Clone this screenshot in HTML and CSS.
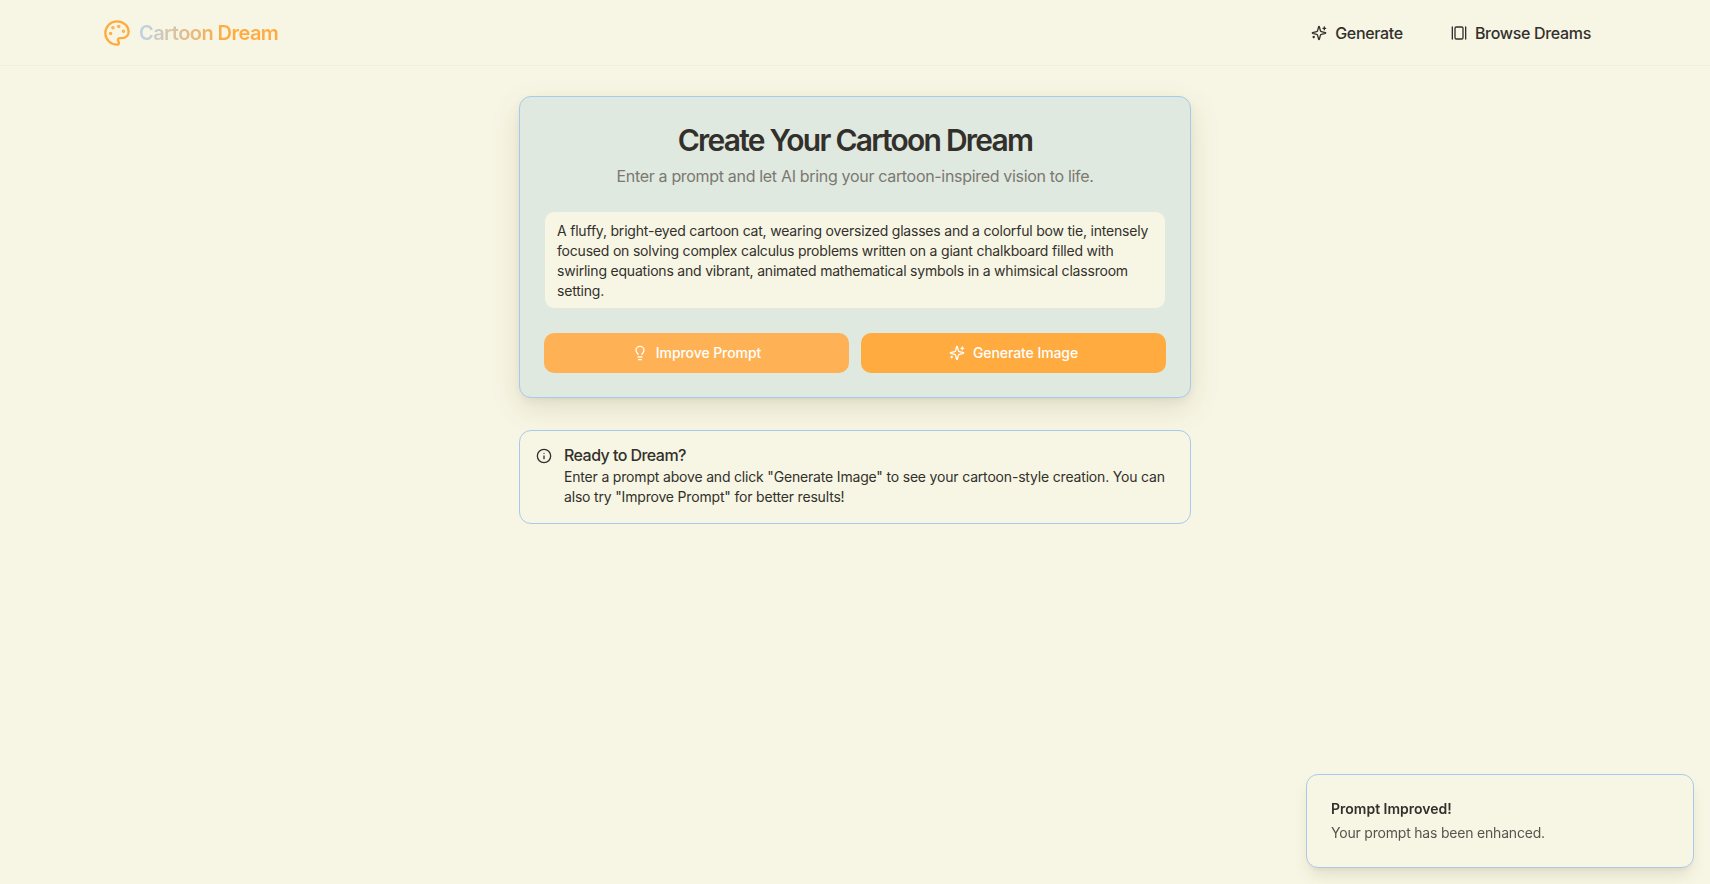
FILE: index.html
```html
<!DOCTYPE html>
<html lang="en">
<head>
<meta charset="utf-8">
<title>Cartoon Dream</title>
<link rel="stylesheet" href="styles.css">
</head>
<body>
<header class="topbar">
  <div class="topbar-inner">
    <a class="brand" href="#">
      <svg class="brand-icon" viewBox="0 0 24 24" fill="none" stroke="currentColor" stroke-width="2" stroke-linecap="round" stroke-linejoin="round"><circle cx="13.5" cy="6.5" r=".5" fill="currentColor"/><circle cx="17.5" cy="10.5" r=".5" fill="currentColor"/><circle cx="8.5" cy="7.5" r=".5" fill="currentColor"/><circle cx="6.5" cy="12.5" r=".5" fill="currentColor"/><path d="M12 2C6.5 2 2 6.5 2 12s4.5 10 10 10c.926 0 1.648-.746 1.648-1.688 0-.437-.18-.835-.437-1.125-.29-.289-.438-.652-.438-1.125a1.64 1.64 0 0 1 1.668-1.668h1.996c3.051 0 5.555-2.503 5.555-5.554C21.965 6.012 17.461 2 12 2z"/></svg>
      <span class="brand-name">Cartoon Dream</span>
    </a>
    <nav class="nav">
      <a class="nav-link" href="#">
        <svg class="icon" viewBox="0 0 24 24" fill="none" stroke="currentColor" stroke-width="2" stroke-linecap="round" stroke-linejoin="round"><path d="M9.937 15.5A2 2 0 0 0 8.5 14.063l-6.135-1.582a.5.5 0 0 1 0-.962L8.5 9.936A2 2 0 0 0 9.937 8.5l1.582-6.135a.5.5 0 0 1 .963 0L14.063 8.5A2 2 0 0 0 15.5 9.937l6.135 1.581a.5.5 0 0 1 0 .964L15.5 14.063a2 2 0 0 0-1.437 1.437l-1.582 6.135a.5.5 0 0 1-.963 0z"/><path d="M20 3v4"/><path d="M22 5h-4"/><path d="M4 17v2"/><path d="M5 18H3"/></svg>
        Generate
      </a>
      <a class="nav-link" href="#">
        <svg class="icon" viewBox="0 0 24 24" fill="none" stroke="currentColor" stroke-width="2" stroke-linecap="round" stroke-linejoin="round"><path d="M2 3v18"/><rect x="6" y="3" width="12" height="18" rx="2"/><path d="M22 3v18"/></svg>
        Browse Dreams
      </a>
    </nav>
  </div>
</header>

<main class="main">
  <section class="card">
    <h1 class="card-title">Create Your Cartoon Dream</h1>
    <p class="card-sub">Enter a prompt and let AI bring your cartoon-inspired vision to life.</p>
    <textarea class="prompt" rows="4" spellcheck="false">A fluffy, bright-eyed cartoon cat, wearing oversized glasses and a colorful bow tie, intensely focused on solving complex calculus problems written on a giant chalkboard filled with swirling equations and vibrant, animated mathematical symbols in a whimsical classroom setting.</textarea>
    <div class="actions">
      <button class="btn btn-soft" type="button">
        <svg class="icon" viewBox="0 0 24 24" fill="none" stroke="currentColor" stroke-width="2" stroke-linecap="round" stroke-linejoin="round"><path d="M15 14c.2-1 .7-1.7 1.5-2.5 1-.9 1.5-2.2 1.5-3.5A6 6 0 0 0 6 8c0 1 .2 2.2 1.5 3.5.7.7 1.3 1.5 1.5 2.5"/><path d="M9 18h6"/><path d="M10 22h4"/></svg>
        Improve Prompt
      </button>
      <button class="btn btn-solid" type="button">
        <svg class="icon" viewBox="0 0 24 24" fill="none" stroke="currentColor" stroke-width="2" stroke-linecap="round" stroke-linejoin="round"><path d="M9.937 15.5A2 2 0 0 0 8.5 14.063l-6.135-1.582a.5.5 0 0 1 0-.962L8.5 9.936A2 2 0 0 0 9.937 8.5l1.582-6.135a.5.5 0 0 1 .963 0L14.063 8.5A2 2 0 0 0 15.5 9.937l6.135 1.581a.5.5 0 0 1 0 .964L15.5 14.063a2 2 0 0 0-1.437 1.437l-1.582 6.135a.5.5 0 0 1-.963 0z"/><path d="M20 3v4"/><path d="M22 5h-4"/><path d="M4 17v2"/><path d="M5 18H3"/></svg>
        Generate Image
      </button>
    </div>
  </section>

  <section class="notice">
    <svg class="icon notice-icon" viewBox="0 0 24 24" fill="none" stroke="currentColor" stroke-width="2" stroke-linecap="round" stroke-linejoin="round"><circle cx="12" cy="12" r="10"/><path d="M12 16v-4"/><path d="M12 8h.01"/></svg>
    <div>
      <h2 class="notice-title">Ready to Dream?</h2>
      <p class="notice-text">Enter a prompt above and click "Generate Image" to see your cartoon-style creation. You can also try "Improve Prompt" for better results!</p>
    </div>
  </section>
</main>

<aside class="toast">
  <div class="toast-title">Prompt Improved!</div>
  <div class="toast-text">Your prompt has been enhanced.</div>
</aside>
</body>
</html>
```
FILE: styles.css
```css
* { box-sizing: border-box; }
html, body { height: 100%; }
body {
  margin: 0;
  background: #f7f6e4;
  color: #33302c;
  font-family: Inter, "Liberation Sans", sans-serif;
  overflow: hidden;
}
a { color: inherit; text-decoration: none; }
.icon { width: 16px; height: 16px; flex: none; }

.topbar {
  height: 66px;
  border-bottom: 1px solid #efeee0;
}
.topbar-inner {
  max-width: 1536px;
  height: 65px;
  margin: 0 auto;
  padding: 0 16px;
  display: flex;
  align-items: center;
  justify-content: space-between;
}
.brand { display: flex; align-items: center; gap: 8px; }
.brand-icon { width: 28px; height: 28px; color: #ffab40; }
.brand-name {
  font-size: 20px;
  line-height: 28px;
  font-weight: 600;
  letter-spacing: -.55px;
  background: linear-gradient(90deg, #bcd3e8, #ffab40 62%);
  -webkit-background-clip: text;
  background-clip: text;
  color: transparent;
}
.nav { display: flex; gap: 16px; }
.nav-link {
  display: flex;
  align-items: center;
  gap: 8px;
  height: 40px;
  padding: 0 16px;
  font-size: 16px;
  font-weight: 450;
  letter-spacing: -.32px;
}

.main {
  width: 672px;
  margin: 30px auto 0;
  display: flex;
  flex-direction: column;
  gap: 32px;
}
.card {
  background: #dfe9e0;
  border: 1px solid #a9c9ea;
  border-radius: 12px;
  padding: 24px;
  box-shadow: 0 10px 30px rgba(90,80,40,.13), 0 4px 8px -2px rgba(90,80,40,.1);
}
.card-title {
  margin: 1px 0 0;
  text-align: center;
  font-size: 30px;
  line-height: 36px;
  font-weight: 600;
  letter-spacing: -1.75px;
}
.card-sub {
  margin: 6px 0 0;
  text-align: center;
  font-size: 16px;
  line-height: 24px;
  letter-spacing: -.32px;
  color: #7b7870;
}
.prompt {
  display: block;
  width: 100%;
  height: 98px;
  margin-top: 23px;
  padding: 9px 12px 7px;
  border: 1px solid transparent;
  border-radius: 10px;
  background: #f7f6e4;
  background-clip: padding-box;
  color: #33302c;
  font: 14px/20px Inter, "Liberation Sans", sans-serif;
  letter-spacing: -.2px;
  resize: none;
  outline: none;
  overflow: hidden;
}
.actions {
  display: grid;
  grid-template-columns: 1fr 1fr;
  gap: 12px;
  margin-top: 24px;
}
.btn {
  display: flex;
  align-items: center;
  justify-content: center;
  gap: 8px;
  height: 40px;
  border: 0;
  border-radius: 10px;
  color: #fff;
  font: 500 14px/20px Inter, "Liberation Sans", sans-serif;
  letter-spacing: -.08px;
}
.btn-soft { background: #ffb255; }
.btn-solid { background: #ffab40; }

.notice {
  display: flex;
  gap: 12px;
  padding: 16px;
  background: #f7f6e4;
  border: 1px solid #a9c9ea;
  border-radius: 12px;
}
.notice-icon { margin-top: 1px; }
.notice-title {
  margin: 0 0 4px;
  font-size: 16px;
  line-height: 16px;
  font-weight: 450;
  letter-spacing: -.55px;
}
.notice-text {
  margin: 0;
  font-size: 14px;
  line-height: 20px;
  letter-spacing: -.18px;
}

.toast {
  position: fixed;
  right: 16px;
  bottom: 16px;
  width: 388px;
  padding: 24px;
  background: #f7f6e4;
  border: 1px solid #a9c9ea;
  border-radius: 12px;
  box-shadow: 0 10px 15px -3px rgba(90,80,40,.13), 0 4px 6px -4px rgba(90,80,40,.1);
}
.toast-title { font-size: 14px; line-height: 20px; font-weight: 600; }
.toast-text { margin-top: 4px; font-size: 14px; line-height: 20px; letter-spacing: -.2px; color: #57544d; }
```
